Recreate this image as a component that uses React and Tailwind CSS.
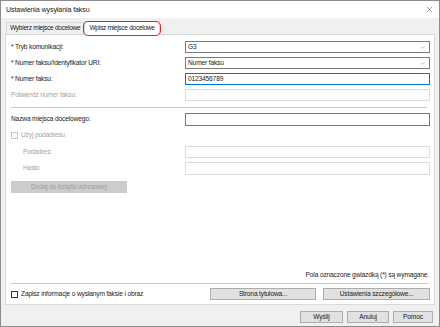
import React from "react";
import { ChevronDown, X } from "lucide-react";

function Select({ value }) {
  return (
    <div className="flex h-[12px] items-center justify-between border border-[#7a7a7a] bg-white pl-[2px] pr-[3px]">
      <span>{value}</span>
      <ChevronDown size={7} strokeWidth={1.5} className="text-[#6d6d6d]" />
    </div>
  );
}

function Field({ value, state = "normal", tall }) {
  const border =
    state === "focus"
      ? "border-[#0078d7]"
      : state === "disabled"
      ? "border-[#dcdcdc]"
      : "border-[#7a7a7a]";
  return (
    <div
      className={`flex ${tall ? "h-[13px]" : "h-[12px]"} items-center border ${border} bg-white pl-[2px]`}
    >
      {value}
    </div>
  );
}

function Row({ label, disabled, indent, children }) {
  return (
    <div className="flex items-center">
      <div
        className={`w-[174px] shrink-0 ${indent ? "pl-[12px]" : ""} ${
          disabled ? "text-[#a3a3a3]" : "text-[#1a1a1a]"
        }`}
      >
        {label}
      </div>
      <div className="flex-1">{children}</div>
    </div>
  );
}

function Button({ children, className = "" }) {
  return (
    <div
      className={`flex h-[12px] items-center justify-center border border-[#adadad] bg-[#e1e1e1] text-[#1a1a1a] ${className}`}
    >
      {children}
    </div>
  );
}

export default function App() {
  return (
    <div
      className="flex h-[327px] w-[440px] flex-col border border-[#8c8c8c] text-[6.6px] leading-none tracking-[-0.15px] text-[#1a1a1a]"
      style={{ fontFamily: '"Liberation Sans", Arial, sans-serif' }}
    >
      {/* title bar */}
      <div className="flex h-[17px] shrink-0 items-center justify-between bg-white pl-[5px] pr-[5px]">
        <span className="text-[7.2px]">Ustawienia wysyłania faksu</span>
        <X size={9} strokeWidth={1.2} className="text-[#333]" />
      </div>

      <div className="flex flex-1 flex-col bg-[#f0f0f0] px-[4px]">
        {/* tabs */}
        <div className="flex h-[16px] shrink-0 items-end pl-[1px] tracking-[-0.3px]">
          <div className="flex h-[12px] items-center border border-b-0 border-[#d9d9d9] bg-[#f0f0f0] px-[3px]">
            Wybierz miejsce docelowe
          </div>
          <div className="relative -mb-px flex h-[14px] items-center border border-b-0 border-[#d9d9d9] bg-white px-[4px]">
            Wpisz miejsce docelowe
            <div className="absolute -bottom-[1px] -left-[2px] -right-[2px] top-[-1px] rounded-[5px] border-[1.6px] border-[#e0202a]" />
          </div>
        </div>

        {/* panel */}
        <div className="flex h-[271px] flex-col border border-[#d9d9d9] bg-white pl-[5px] pr-[4px]">
          <div className="mt-[6px] flex flex-col gap-[4px]">
            <Row label="* Tryb komunikacji:">
              <Select value="G3" />
            </Row>
            <Row label="* Numer faksu/Identyfikator URI:">
              <Select value="Numer faksu" />
            </Row>
            <Row label="* Numer faksu:">
              <Field value="0123456789" state="focus" />
            </Row>
            <Row label="Potwierdź numer faksu:" disabled>
              <Field state="disabled" />
            </Row>
          </div>

          <div className="mr-[3px] mt-[6px] border-t border-[#c8c8c8]" />

          <div className="mt-[5px]">
            <Row label="Nazwa miejsca docelowego:">
              <Field tall />
            </Row>
          </div>

          <div className="mt-[6px] flex items-center gap-[3px] text-[#a3a3a3]">
            <div className="h-[7px] w-[7px] border border-[#c8c8c8] bg-white" />
            <span>Użyj podadresu</span>
          </div>

          <div className="mt-[7px] flex flex-col gap-[4px]">
            <Row label="Podadres:" disabled indent>
              <Field state="disabled" />
            </Row>
            <Row label="Hasło:" disabled indent>
              <Field state="disabled" tall />
            </Row>
          </div>

          <div className="mt-[6px] flex h-[12px] w-[116px] items-center justify-center bg-[#cccccc] text-[#a0a0a0]">
            Dodaj do książki adresowej
          </div>

          <div className="flex-1" />

          <div className="pr-[1px] text-right">
            Pola oznaczone gwiazdką (*) są wymagane.
          </div>
          <div className="mr-[2px] mt-[4px] border-t border-[#c8c8c8]" />
          <div className="mb-[4px] mt-[4px] flex items-center">
            <div className="flex flex-1 items-center gap-[3px]">
              <div className="h-[7px] w-[7px] border border-[#333] bg-white" />
              <span>Zapisz informacje o wysłanym faksie i obraz</span>
            </div>
            <Button className="w-[106px]">Strona tytułowa...</Button>
            <Button className="ml-[7px] w-[107px]">Ustawienia szczegółowe...</Button>
          </div>
        </div>

        {/* footer buttons */}
        <div className="mt-[6px] flex justify-end gap-[4px] pr-[2px]">
          <Button className="w-[43px] border-[#0078d7]">Wyślij</Button>
          <Button className="w-[42px]">Anuluj</Button>
          <Button className="w-[40px]">Pomoc</Button>
        </div>
      </div>
    </div>
  );
}
